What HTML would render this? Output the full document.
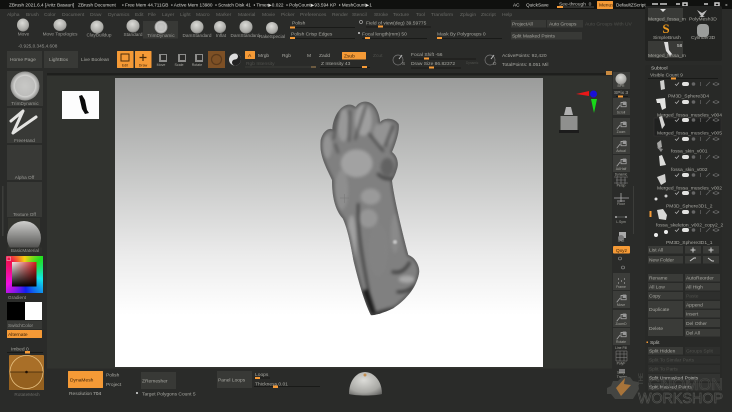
<!DOCTYPE html>
<html><head><meta charset="utf-8"><title>ZBrush</title>
<style>
html,body{margin:0;padding:0;background:#2a2b29;width:732px;height:412px;overflow:hidden}
svg{display:block;position:absolute;left:0;top:0;filter:blur(.35px)}
#pick{position:absolute;left:6px;top:256px;width:37px;height:37px;background:conic-gradient(from 315deg,#f0104a 0deg,#f8d010 45deg,#20e020 90deg,#10e8e8 150deg,#1020f0 220deg,#f010e0 285deg,#f0104a 360deg)}
text{font-family:"Liberation Sans",sans-serif;font-size:4.9px;fill:#a8a8a2;white-space:pre}
.m{fill:#6a6b67}.w{fill:#dcdcd8;font-size:4.7px}.d{fill:#50514d}.k{fill:#3c2208}.b{fill:#383936}.o{fill:#f59a36}.c{text-anchor:middle}
.s{font-size:4.7px;fill:#9a9a96}.h{fill:#c0c0bc}
</style></head><body>
<div id="pick"></div>
<svg width="732" height="412" viewBox="0 0 732 412" xmlns="http://www.w3.org/2000/svg">
<defs>
<radialGradient id="sp" cx=".45" cy=".35" r=".8"><stop offset="0" stop-color="#dcdcd8"/><stop offset=".65" stop-color="#a8a8a4"/><stop offset="1" stop-color="#5d5d5b"/></radialGradient>
<radialGradient id="td" cx=".5" cy=".5" r=".5"><stop offset="0" stop-color="#c8c8c6"/><stop offset=".68" stop-color="#bdbdbb"/><stop offset=".72" stop-color="#d4d4d2"/><stop offset="1" stop-color="#8f8f8d"/></radialGradient>
<linearGradient id="mat" x1="0" y1="0" x2="0" y2="1"><stop offset="0" stop-color="#cfcfcd"/><stop offset=".55" stop-color="#7a7a78"/><stop offset="1" stop-color="#2c2c2a"/></linearGradient>
<linearGradient id="cv" x1="0" y1="0" x2="0" y2="1"><stop offset="0" stop-color="#9b9c9b"/><stop offset=".3" stop-color="#c2c3c2"/><stop offset=".62" stop-color="#ececec"/><stop offset=".82" stop-color="#fff"/></linearGradient>
<linearGradient id="sq" x1="0" y1="0" x2="1" y2="0"><stop offset="0" stop-color="#eee"/><stop offset="1" stop-color="#d81818"/></linearGradient>
<linearGradient id="sq2" x1="0" y1="0" x2="0" y2="1"><stop offset="0" stop-color="#000" stop-opacity="0"/><stop offset="1" stop-color="#000"/></linearGradient>
<path id="fp" d="M62 150C68 125 85 112 97 118C98 85 120 42 150 44C160 44 165 52 168 50C180 30 212 28 228 55C238 72 240 90 240 96C258 80 285 85 296 102C300 125 285 165 276 186C292 198 298 220 290 240C285 258 278 268 276 272C282 320 300 400 325 495C345 502 358 525 358 545C352 590 320 628 280 655C250 670 225 675 213 676C190 630 172 560 160 510C150 450 140 410 128 385C105 360 96 320 96 270C80 235 56 195 62 150Z"/>
<clipPath id="fc"><use href="#fp"/></clipPath>
<symbol id="ir" viewBox="0 0 46 6"><path d="M1 3l1.5 1.5L5 1.5" stroke="#bbb" fill="none" stroke-width=".7"/><rect x="8" y="1" width="7" height="4" rx="2" fill="#e2e2e0"/><circle cx="19.500" cy="3" r="1.800" fill="#666"/><rect x="26" y="1" width="1" height="4" fill="#555"/><path d="M32 5l4-4" stroke="#666" stroke-width=".8"/><path d="M39 3q3-2.500 6 0q-3 2.500-6 0z" stroke="#888" fill="none" stroke-width=".6"/></symbol>
<symbol id="cam" viewBox="0 0 14 14"><path d="M2 12l4-5M7 4h6v5H7z" stroke="#aaa" stroke-width=".9" fill="none"/><path d="M9 3h4v4h-4z" fill="#999"/></symbol>
</defs>

<!-- title bar -->
<rect width="732" height="9" fill="#10110f"/>
<g>
<text x="9" y="6.300" class="w">ZBrush 2021.6.4 [Aritz Basauri]</text>
<text x="78" y="6.300" class="w">ZBrush Document</text>
<text x="122" y="6.300" class="w">▪ Free Mem 44.711GB  ▪ Active Mem 13980  ▪ Scratch Disk 41  ▪ Timer▶0.022  ▪ PolyCount▶93.594 KP  ▪ MeshCount▶1</text>
<text x="513" y="6.300" class="w">AC</text><text x="526" y="6.300" class="w">QuickSave</text>
<text x="559" y="5.500" class="h">See-through  0</text>
<rect x="557" y="6.500" width="37" height="1" fill="#4a4a48"/><rect x="557" y="6" width="6" height="2" class="o"/>
<rect x="597" y="1" width="16" height="8" fill="#f59a36" rx=".5"/><text x="599" y="6.500" class="k">Menus</text>
<text x="616" y="6.300" class="w">DefaultZScript</text>
<path d="M652 4h6M660 4h7M676 4h4M683 3h4v3h-4zM704 4h4M715 3h4v3h-4z" stroke="#ccc" stroke-width="1.500" fill="none"/>
<text x="725" y="6.500" class="w">×</text>
</g>

<!-- menu row -->
<g>
<text x="7" y="16" class="m">Alpha</text><text x="26" y="16" class="m">Brush</text><text x="44" y="16" class="m">Color</text><text x="62" y="16" class="m">Document</text><text x="90" y="16" class="m">Draw</text><text x="108" y="16" class="m">Dynamics</text><text x="135" y="16" class="m">Edit</text><text x="148" y="16" class="m">File</text><text x="162" y="16" class="m">Layer</text><text x="180" y="16" class="m">Light</text><text x="196" y="16" class="m">Macro</text><text x="216" y="16" class="m">Marker</text><text x="238" y="16" class="m">Material</text><text x="262" y="16" class="m">Movie</text><text x="281" y="16" class="m">Picker</text><text x="300" y="16" class="m">Preferences</text><text x="332" y="16" class="m">Render</text><text x="352" y="16" class="m">Stencil</text><text x="374" y="16" class="m">Stroke</text><text x="393" y="16" class="m">Texture</text><text x="416" y="16" class="m">Tool</text><text x="431" y="16" class="m">Transform</text><text x="460" y="16" class="m">Zplugin</text><text x="481" y="16" class="m">Zscript</text><text x="502" y="16" class="m">Help</text>
</g>

<!-- brush row -->
<rect x="143" y="21" width="35" height="17.500" fill="#383936"/>
<ellipse cx="23" cy="25" rx="6" ry="6.500" fill="url(#sp)"/><ellipse cx="60" cy="25" rx="6.500" ry="6" fill="url(#sp)"/>
<circle cx="97" cy="27" r="6.500" fill="url(#sp)"/><circle cx="133" cy="26" r="6.500" fill="url(#sp)"/>
<circle cx="161" cy="27" r="6.500" fill="url(#td)"/><circle cx="197" cy="27" r="6.500" fill="url(#sp)"/>
<circle cx="220" cy="27" r="6" fill="url(#sp)"/><circle cx="246" cy="27" r="6.500" fill="url(#sp)"/><circle cx="272" cy="28" r="6" fill="url(#sp)"/>
<g>
<text x="23.500" y="35.500" class="s c">Move</text><text x="60" y="35.500" class="s c">Move Topologics</text><text x="99" y="36.500" class="s c">ClayBuildup</text><text x="133" y="36" class="s c">Standard</text><text x="161" y="37" class="s c">TrimDynamic</text><text x="197" y="37" class="s c">DamStandard</text><text x="221" y="37" class="s c">Inflat</text><text x="245" y="37" class="s c">DamStandard</text><text x="272" y="38" class="s c">RakeSpecial</text>
</g>
<text x="292" y="24.500">Polish</text><rect x="290" y="27" width="65" height="1" fill="#191a18"/><rect x="290" y="26.500" width="5" height="2" class="o"/>
<circle cx="361" cy="22" r="1.500" fill="none" stroke="#aaa" stroke-width=".7"/>
<text x="291" y="35.500">Polish Crisp Edges</text><rect x="290" y="38" width="65" height="1" fill="#191a18"/><rect x="290" y="37" width="5" height="2" class="o"/>
<circle cx="359" cy="33" r="1" fill="#ccc"/>
<text x="366" y="24.500">Field of view(deg) 39.59775</text><rect x="366" y="26.500" width="65" height="1" fill="#191a18"/><rect x="378" y="25.500" width="5" height="2" class="o"/>
<text x="362" y="35.500">Focal length(mm) 50</text><rect x="362" y="38" width="65" height="1" fill="#191a18"/><rect x="365" y="37" width="5" height="2" class="o"/>
<text x="437" y="35.500">Mask By Polygroups 0</text><rect x="437" y="38" width="65" height="1" fill="#191a18"/><rect x="437" y="37" width="5" height="2" class="o"/>
<rect x="511" y="20" width="35" height="7.500" class="b"/><text x="512" y="25.500">ProjectAll</text>
<rect x="547" y="20" width="36" height="7.500" class="b"/><text x="549" y="25.500">Auto Groups</text>
<text x="585" y="25.500" class="d">Auto Groups With UV</text>
<rect x="511" y="32" width="71" height="7.500" class="b"/><text x="512" y="37.500">Split Masked Points</text>
<text x="18" y="47.500" class="s">-0.925,0.345,4.608</text>

<!-- tool row -->
<rect x="7" y="51" width="35" height="17" class="b"/><text x="10" y="61">Home Page</text>
<rect x="44" y="51" width="34" height="17" class="b"/><text x="49" y="61">LightBox</text>
<text x="81" y="61">Live Boolean</text>
<rect x="117" y="51" width="16.500" height="17" class="o" rx=".5"/><rect x="121" y="54" width="8" height="7" fill="none" stroke="#4a2c0a"/><text x="125" y="66.500" class="k c" style="font-size:3.600px">Edit</text>
<rect x="135" y="51" width="16.500" height="17" class="o" rx=".5"/><path d="M143 54v7M139.500 57.500h7" stroke="#4a2c0a" stroke-width="1.200"/><text x="143" y="66.500" class="k c" style="font-size:3.600px">Draw</text>
<rect x="159" y="54" width="8" height="8" fill="#8d8d8b"/><rect x="161" y="55" width="5" height="5" fill="#2c2c2a"/><text x="161" y="66" class="c" style="font-size:3.600px">Move</text>
<rect x="178" y="54" width="8" height="8" fill="#8d8d8b"/><rect x="180" y="55" width="5" height="5" fill="#2c2c2a"/><text x="179" y="66" class="c" style="font-size:3.600px">Scale</text>
<rect x="195" y="54" width="8" height="8" fill="#8d8d8b"/><rect x="197" y="55" width="5" height="5" fill="#2c2c2a"/><text x="197" y="66" class="c" style="font-size:3.600px">Rotate</text>
<rect x="208" y="51" width="17" height="17" fill="#7d5025"/><circle cx="216.500" cy="59.500" r="5" fill="none" stroke="#5a3a1c" stroke-width="1.200"/>
<circle cx="235" cy="59.500" r="6" fill="#ddd"/><path d="M235 53.500a3 3 0 0 1 0 6a3 3 0 0 0 0 6a6 6 0 0 0 0-12z" fill="#222"/>
<rect x="245" y="51" width="10" height="8" class="o" rx=".5"/><text x="248" y="57" class="k">A</text>
<text x="258" y="57">Mrgb</text><text x="282" y="57">Rgb</text><text x="307" y="57">M</text><text x="319" y="57">Zadd</text>
<rect x="342" y="52" width="24" height="7.500" class="o" rx=".5"/><text x="344" y="57.500" class="k">Zsub</text>
<text x="373" y="57" class="d">Zcut</text>
<text x="246" y="65" class="d">Rgb Intensity</text><rect x="245" y="66.500" width="70" height="1" fill="#3a3b38"/><rect x="311" y="66" width="5" height="2" fill="#6b5a40"/>
<text x="321" y="65">Z Intensity 43</text><rect x="320" y="67" width="50" height="1" fill="#191a18"/><rect x="362" y="66" width="5" height="2" class="o"/>
<circle cx="398" cy="60" r="5" fill="none" stroke="#777" stroke-width=".7"/><text x="402" y="65" class="s">S</text><path d="M399 59l3-4" stroke="#bbb"/>
<circle cx="490" cy="60" r="5" fill="none" stroke="#777" stroke-width=".7"/><text x="493" y="65" class="s">D</text><path d="M491 59l3-4" stroke="#bbb"/>
<text x="411" y="56">Focal Shift -56</text><rect x="411" y="58.500" width="65" height="1" fill="#191a18"/><rect x="424" y="57.500" width="5" height="2" class="o"/>
<text x="411" y="65">Draw Size 86.82372</text><rect x="411" y="67.500" width="50" height="1" fill="#191a18"/><rect x="429" y="66.500" width="5" height="2" class="o"/>
<text x="466" y="64" class="d" style="font-size:3.200px">Dynamic</text>
<text x="502" y="57">ActivePoints: 92,420</text><text x="502" y="66">TotalPoints: 8.051 Mil</text>

<!-- top right panel -->
<rect x="645" y="6" width="77" height="55" rx="2" fill="#232422"/>
<rect x="648" y="8" width="35" height="13" fill="#393a37"/><path d="M660 9l6 0l-3 3z" fill="#ddd"/>
<text x="648" y="20.300">Merged_fossa_m</text><text x="689" y="20.300">PolyMesh3D</text>
<path d="M697 10l5 3l5-3l-4 6l2 1h-6l2-1z" fill="#bbb"/>
<text x="666" y="33" style="font-size:13px;font-family:'Liberation Serif',serif;font-weight:bold;fill:#ee9a1e;text-anchor:middle">S</text>
<text x="653" y="38.800">SimpleBrush</text><text x="691" y="38.800">Cylinder3D</text>
<rect x="697" y="24" width="12" height="13" rx="4" fill="#9b9d9b"/>
<rect x="648" y="41" width="35" height="17" fill="#393a37"/>
<path d="M664 42l4 0l1 8l3 4l-2 2l-4-5z" fill="#ddd"/>
<text x="677" y="47" class="w">58</text><text x="648" y="56.800">Merged_fossa_m</text>

<!-- viewport -->
<rect x="47" y="73" width="565" height="2.500" fill="#1e1f1d"/>
<rect x="47" y="75.500" width="565" height="293" fill="#31332f"/>
<rect x="606" y="71" width="6" height="4" fill="#c88a40"/>
<rect x="115" y="78" width="428" height="289" fill="url(#cv)"/>
<rect x="62" y="91" width="37" height="28" fill="#fdfdfd"/>
<path d="M79 96l3-1l3 5l2 10l2 3l-4 1l-3-5z" fill="#0a0a0a"/>

<!-- foot -->
<g transform="translate(300 90) scale(.3333)">
<g clip-path="url(#fc)">
<rect x="40" y="20" width="330" height="670" fill="#808080"/>
<g style="filter:blur(5px)">
<ellipse cx="82" cy="170" rx="14" ry="35" fill="#939393"/><ellipse cx="130" cy="105" rx="18" ry="50" fill="#989898"/>
<ellipse cx="190" cy="90" rx="26" ry="48" fill="#9e9e9e"/><ellipse cx="250" cy="130" rx="30" ry="38" fill="#939393"/>
<path d="M118 60l-18 90M150 60l-3 95M198 45l-33 105M105 160l10 30" stroke="#505050" stroke-width="6" fill="none"/>
<path d="M206 130l45 55M280 105l-25 65" stroke="#4a4a4a" stroke-width="7" fill="none"/>
<ellipse cx="170" cy="220" rx="48" ry="42" fill="#a2a2a2"/><ellipse cx="262" cy="232" rx="20" ry="28" fill="#626262"/>
<path d="M232 250q20 22 45 15" stroke="#404040" stroke-width="8" fill="none"/>
<ellipse cx="125" cy="300" rx="20" ry="60" fill="#8e8e8e"/><ellipse cx="212" cy="320" rx="30" ry="24" fill="#9a9a9a"/>
<ellipse cx="205" cy="385" rx="28" ry="28" fill="#969696"/><path d="M175 340C170 420 190 520 205 600" stroke="#3c3c3c" stroke-width="7" fill="none"/>
<ellipse cx="155" cy="450" rx="14" ry="75" fill="#a0a0a0"/><ellipse cx="235" cy="480" rx="30" ry="80" fill="#828282"/>
<ellipse cx="285" cy="430" rx="12" ry="60" fill="#8a8a8a"/>
<path d="M275 545q35 10 55-30" stroke="#404040" stroke-width="9" fill="none"/><ellipse cx="320" cy="568" rx="24" ry="11" fill="#a8a8a8"/><path d="M290 605q30 5 55-20" stroke="#383838" stroke-width="8" fill="none"/>
<path d="M195 600L220 680L285 660" stroke="#1b1b1b" stroke-width="22" fill="none"/>
<use href="#fp" fill="none" stroke="#505050" stroke-width="8"/>
</g>
<circle cx="285" cy="456" r="6" fill="#c4c4c4" style="filter:blur(2px)"/>
</g>
</g>
<path d="M340 198h9M344.500 194v9" stroke="#777" stroke-width=".5"/>

<!-- gizmo -->
<path d="M576 94l13-3v5z" fill="#e81818"/><circle cx="593.500" cy="94" r="3.500" fill="#1a10d8"/><path d="M591 99h6l-3 14z" fill="#18d818"/>
<path d="M566 107h5l2 8h-9z" fill="#b0b0b0"/><rect x="560.500" y="116" width="17" height="14" fill="#8f908e"/><rect x="559" y="130" width="20" height="3" fill="#1c1c1c"/>

<!-- right shelf -->
<g fill="#3c3d3a">
<rect x="613" y="72" width="17" height="17"/><rect x="613" y="98" width="17" height="17"/><rect x="613" y="118" width="17" height="17"/><rect x="613" y="137" width="17" height="17"/><rect x="613" y="155" width="17" height="17"/><rect x="613" y="273" width="17" height="17"/><rect x="613" y="291" width="17" height="17"/><rect x="613" y="310" width="17" height="17"/><rect x="613" y="328" width="17" height="17"/>
</g>
<circle cx="621" cy="79" r="5.500" fill="url(#sp)"/><text x="621" y="87" class="c" style="font-size:3.400px">BPR</text>
<text x="614" y="94">SPix 3</text><rect x="616" y="96" width="12" height="1" fill="#191a18"/><rect x="618" y="95.500" width="5" height="2" class="o"/>
<use href="#cam" x="615" y="99" width="12" height="12"/><text x="621" y="113.500" class="c" style="font-size:3.400px">Scroll</text>
<use href="#cam" x="615" y="119" width="12" height="12"/><text x="621" y="133" class="c" style="font-size:3.400px">Zoom</text>
<use href="#cam" x="615" y="138" width="12" height="12"/><text x="621" y="152" class="c" style="font-size:3.400px">Actual</text>
<use href="#cam" x="615" y="156" width="12" height="12"/><text x="621" y="170" class="c" style="font-size:3.400px">AAHalf</text>
<path d="M614 177h14M616 180h10M614 183h14M617 177v7M621 177v7M625 177v7" stroke="#888" stroke-width=".6" fill="none"/><text x="621" y="175.500" class="c" style="font-size:3.200px">Dynamic</text><text x="621" y="186.500" class="c" style="font-size:3.400px">Persp</text>
<path d="M614 198h15M621 193v9M617 201h8" stroke="#aaa" stroke-width=".8"/><text x="621" y="205" class="c" style="font-size:3.400px">Floor</text>
<path d="M616 218v-2M626 218v-2" stroke="#bbb" stroke-width="1.500"/><path d="M615 217h12" stroke="#777" stroke-width=".6"/><text x="621" y="223" class="c" style="font-size:3.400px">L.Sym</text>
<rect x="619" y="232" width="7" height="6" fill="#aaa"/><circle cx="621" cy="238" r="3" fill="#777"/><text x="621" y="242" class="c" style="font-size:3.400px">XYZ</text>
<rect x="613" y="246" width="17" height="7.500" class="o" rx="1"/><text x="621.500" y="252" class="k c">Qxyz</text>
<circle cx="620" cy="258.500" r="1.500" fill="none" stroke="#999" stroke-width=".6"/><circle cx="623" cy="267.500" r="1.500" fill="none" stroke="#999" stroke-width=".6"/>
<text x="621" y="288" class="c" style="font-size:3.400px">Frame</text><path d="M618 279h1M624 279h1M618 283h1M624 283h1M621 281h1" stroke="#bbb"/>
<use href="#cam" x="615" y="292" width="12" height="12"/><text x="621" y="306" class="c" style="font-size:3.400px">Move</text>
<use href="#cam" x="615" y="311" width="12" height="12"/><text x="621" y="325" class="c" style="font-size:3.400px">ZoomD</text>
<use href="#cam" x="615" y="329" width="12" height="12"/><text x="621" y="343" class="c" style="font-size:3.400px">Rotate</text>
<text x="621" y="349" class="c" style="font-size:3.400px">Line Fill</text><path d="M616 351h11v10h-11zM616 354h11M616 357.500h11M620 351v10M624 351v10" stroke="#888" stroke-width=".5" fill="none"/><text x="621" y="364.500" class="c" style="font-size:3.400px">PolyF</text>
<rect x="619" y="369" width="6" height="4" fill="#777"/><text x="622" y="378" class="c" style="font-size:3.400px">Transp</text>
<rect x="633" y="186" width="1" height="48" fill="#3c3d3a"/>
<rect x="2" y="186" width="1.500" height="50" fill="#3c3d3a"/>

<!-- left column -->
<rect x="7" y="71" width="36" height="35" fill="#383936"/>
<circle cx="25" cy="86" r="14.500" fill="url(#td)"/>
<text x="25" y="105" class="s c">TrimDynamic</text>
<rect x="7" y="108" width="35" height="35" fill="#383936"/>
<path d="M11 121L23 111L13 133L36 117" stroke="#e4e4e2" stroke-width="3" fill="none" stroke-linejoin="round" stroke-linecap="round"/>
<text x="24.500" y="142" class="s c">FreeHand</text>
<rect x="7" y="145" width="35" height="35" fill="#383936"/><text x="24.500" y="179" class="s c">Alpha Off</text>
<rect x="7" y="182" width="35" height="35" fill="#383936"/><text x="24.500" y="216" class="s c">Texture Off</text>
<rect x="8" y="218" width="32" height="35" fill="#33342f"/>
<circle cx="24" cy="238" r="17" fill="url(#mat)"/><rect x="7" y="247.500" width="35" height="6" fill="#2e2f2c"/>
<text x="25" y="252" class="s c">BasicMaterial</text>
<rect x="12" y="262" width="24.500" height="24.500" fill="url(#sq)"/><rect x="12" y="262" width="24.500" height="24.500" fill="url(#sq2)"/>
<rect x="7" y="257" width="3.500" height="3.500" fill="none" stroke="#e8a0b0" stroke-width=".7"/>
<text x="8" y="299" class="s">Gradient</text>
<rect x="7" y="302" width="18" height="18" fill="#000"/><rect x="25" y="302" width="17" height="18" fill="#fff"/>
<rect x="7" y="321" width="35" height="8" class="b"/><text x="8" y="327" class="s">SwitchColor</text>
<rect x="7" y="330" width="35" height="8" class="o" rx=".5"/><text x="8" y="336" class="k">Alternate</text>
<text x="11" y="350.500">Imbed 0</text><rect x="7" y="352" width="36" height="1" fill="#191a18"/><rect x="25" y="351" width="5" height="2.500" class="o"/>
<rect x="9" y="355" width="35" height="35" fill="#a96f28" rx="1"/><rect x="9" y="372" width="35" height="18" fill="#94601f"/>
<circle cx="26.500" cy="372" r="16.500" fill="none" stroke="#e6c080" stroke-width=".8"/>
<path d="M10 372h33" stroke="#3d2408" stroke-width=".7"/><circle cx="26.500" cy="372" r="1.300" fill="#1f1004"/>
<text x="27" y="396" class="s c" style="fill:#6a6a66">RotateMesh</text>

<!-- bottom bar -->
<rect x="68" y="371" width="35" height="17" class="o" rx=".5"/><text x="70" y="381.500" class="k">DynaMesh</text>
<text x="106" y="376.500">Polish</text><text x="106" y="386">Project</text>
<text x="69" y="395">Resolution</text><text x="93" y="395" class="h">704</text>
<rect x="141" y="372" width="35" height="17" class="b"/><text x="142" y="382.500">ZRemesher</text>
<circle cx="137" cy="393" r="1" fill="#ddd"/><text x="142" y="395.500">Target Polygons Count 5</text>
<rect x="217" y="371" width="35" height="17" class="b"/><text x="218" y="381.500">Panel Loops</text>
<text x="255" y="376">Loops</text><rect x="254" y="377.500" width="16" height="1" fill="#191a18"/><rect x="255" y="377" width="5" height="2" class="o"/>
<text x="255" y="385.500">Thickness 0.01</text><rect x="254" y="386" width="66" height="1" fill="#191a18"/><rect x="273" y="385.500" width="5" height="2.500" class="o"/>
<path d="M349 394C349 380 357 372 365 372C373 372 382 380 382 394C376 396 355 396 349 394Z" fill="url(#sp)"/><circle cx="365" cy="375" r="1.500" fill="#c48d4d"/>

<!-- subtool panel -->
<rect x="645" y="65" width="77" height="330" fill="#282927" rx="2"/>
<text x="651" y="69.500" class="h">Subtool</text>
<text x="650" y="76.500">Visible Count 9</text><rect x="648" y="78" width="70" height="1" fill="#191a18"/><rect x="671" y="77.500" width="5" height="2" class="o"/>
<rect x="654" y="118" width="67" height="18" fill="#202120" stroke="#383936" stroke-width=".5"/>
<g>
<use href="#ir" x="674" y="81" width="46" height="6"/><use href="#ir" x="674" y="99" width="46" height="6"/><use href="#ir" x="674" y="117" width="46" height="6"/><use href="#ir" x="674" y="136" width="46" height="6"/><use href="#ir" x="674" y="154" width="46" height="6"/><use href="#ir" x="674" y="172" width="46" height="6"/><use href="#ir" x="674" y="190" width="46" height="6"/><use href="#ir" x="674" y="209" width="46" height="6"/><use href="#ir" x="674" y="227" width="46" height="6"/>
</g>
<!-- thumbs -->
<path d="M660 81l4-1l1 9l-4 1z" fill="#cfcfcd"/>
<path d="M656 99l9-1l1 10l-4 2l-2-7h-3z" fill="#e4e4e2"/>
<path d="M659 117l3-1l3 9l-3 4z" fill="#d4d4d2"/>
<path d="M657 143l4-3l1 7l-4 2z" fill="#a5a5a3"/><path d="M657 147l6 2l-2 3z" fill="#888"/>
<path d="M659 156l3-1l4 10l-6 1z" fill="#dcdcda"/>
<path d="M657 177l8-3l1 8l-5 3z" fill="#d0d0ce"/>
<circle cx="656" cy="199" r="1.500" fill="#ddd"/><circle cx="666" cy="196" r="1.500" fill="#ccc"/>
<path d="M657 210l6-1l4 6l-1 5l-7-1z" fill="#d8d8d6"/>
<rect x="649.500" y="211" width="2" height="6" class="o"/>
<circle cx="656" cy="235" r="2" fill="#eee"/><circle cx="666" cy="232" r="2" fill="#eee"/>
<text x="668" y="97.500">PM3D_Sphere3D4</text>
<text x="657" y="116.500">Merged_fossa_muscles_v004</text>
<text x="657" y="134.500">Merged_fossa_muscles_v005</text>
<text x="671" y="152.500">fossa_skin_v001</text>
<text x="671" y="171">fossa_skin_v002</text>
<text x="657" y="189.500">Merged_fossa_muscles_v002</text>
<text x="666" y="207.500">PM3D_Sphere3D1_2</text>
<text x="656" y="226.500">fossa_skeleton_v002_copy2_2</text>
<text x="666" y="244">PM3D_Sphere3D1_1</text>
<!-- buttons -->
<g fill="#3a3b38">
<rect x="648" y="246" width="35" height="7.500"/><rect x="685" y="246" width="16" height="7.500"/><rect x="703" y="246" width="16" height="7.500"/>
<rect x="648" y="256" width="35" height="7.500"/><rect x="685" y="256" width="16" height="7.500"/><rect x="703" y="256" width="16" height="7.500"/>
<rect x="648" y="274" width="35" height="7.500"/><rect x="685" y="274" width="35" height="7.500"/>
<rect x="648" y="283" width="35" height="7.500"/><rect x="685" y="283" width="35" height="7.500"/>
<rect x="648" y="292" width="35" height="7.500"/><rect x="685" y="292" width="35" height="7.500" fill="#2e2f2d"/>
<rect x="648" y="301" width="35" height="16.500"/><rect x="685" y="301" width="35" height="7.500"/><rect x="685" y="310" width="35" height="7.500"/>
<rect x="648" y="319" width="35" height="17"/><rect x="685" y="319" width="35" height="8"/><rect x="685" y="329" width="35" height="7.500"/>
<rect x="648" y="347" width="35" height="7.500"/><rect x="685" y="347" width="35" height="7.500" fill="#2e2f2d"/>
<rect x="648" y="356" width="72" height="7.500" fill="#2e2f2d"/><rect x="648" y="365" width="72" height="7.500" fill="#2e2f2d"/>
<rect x="648" y="374" width="72" height="7.500" fill="#333432"/><rect x="648" y="383" width="72" height="7.500" fill="#333432"/>
</g>
<text x="649" y="251.500">List All</text><text x="649" y="261.500">New Folder</text>
<path d="M693 247.500v5M690.500 250h5M711 247.500v5M708.500 250h5M690 261l4-3l2 0M708 258l4 3l2 0" stroke="#ccc" stroke-width="1" fill="none"/>
<text x="649" y="279.500">Rename</text><text x="686" y="279.500">AutoReorder</text>
<text x="649" y="288.500">All Low</text><text x="686" y="288.500">All High</text>
<text x="649" y="297.500">Copy</text><text x="686" y="297.500" class="d">Paste</text>
<text x="649" y="311">Duplicate</text><text x="686" y="306.500">Append</text><text x="686" y="315.500">Insert</text>
<text x="649" y="330">Delete</text><text x="686" y="325">Del Other</text><text x="686" y="334.500">Del All</text>
<rect x="646.500" y="341.500" width="1.500" height="1.500" class="o"/><text x="650" y="344" class="h">Split</text>
<text x="649" y="352.500">Split Hidden</text><text x="686" y="352.500" class="d">Groups Split</text>
<text x="649" y="361.500" class="d">Split To Similar Parts</text><text x="649" y="370.500" class="d">Split To Parts</text>
<text x="649" y="379.500" class="h">Split Unmasked Points</text><text x="649" y="388.500" class="h">Split Masked Points</text>

<!-- watermark -->
<path d="M607 388l4-2l2-5l5 0l4-4h8l3 4l5 1l1 7l-3 5l-3 5h-18l-4-5l-4 0z" fill="#444542"/>
<path d="M616 388l9-10l-1 6l7 1l-10 11z" fill="#a8743a"/>
<text x="621" y="374" class="c" style="font-size:3.400px">Temp</text>
<g>
<text x="643" y="385" transform="rotate(-90 643 385)" style="font-size:6px;fill:#4f504d">THE</text>
<text x="648" y="390" textLength="75" lengthAdjust="spacingAndGlyphs" style="font-size:17px;fill:none;stroke:#4a4b48;stroke-width:.6">GNOMON</text>
<text x="638" y="403" textLength="85" lengthAdjust="spacingAndGlyphs" style="font-size:15px;fill:none;stroke:#545552;stroke-width:.7">WORKSHOP</text>
</g>
</svg>
</body></html>
